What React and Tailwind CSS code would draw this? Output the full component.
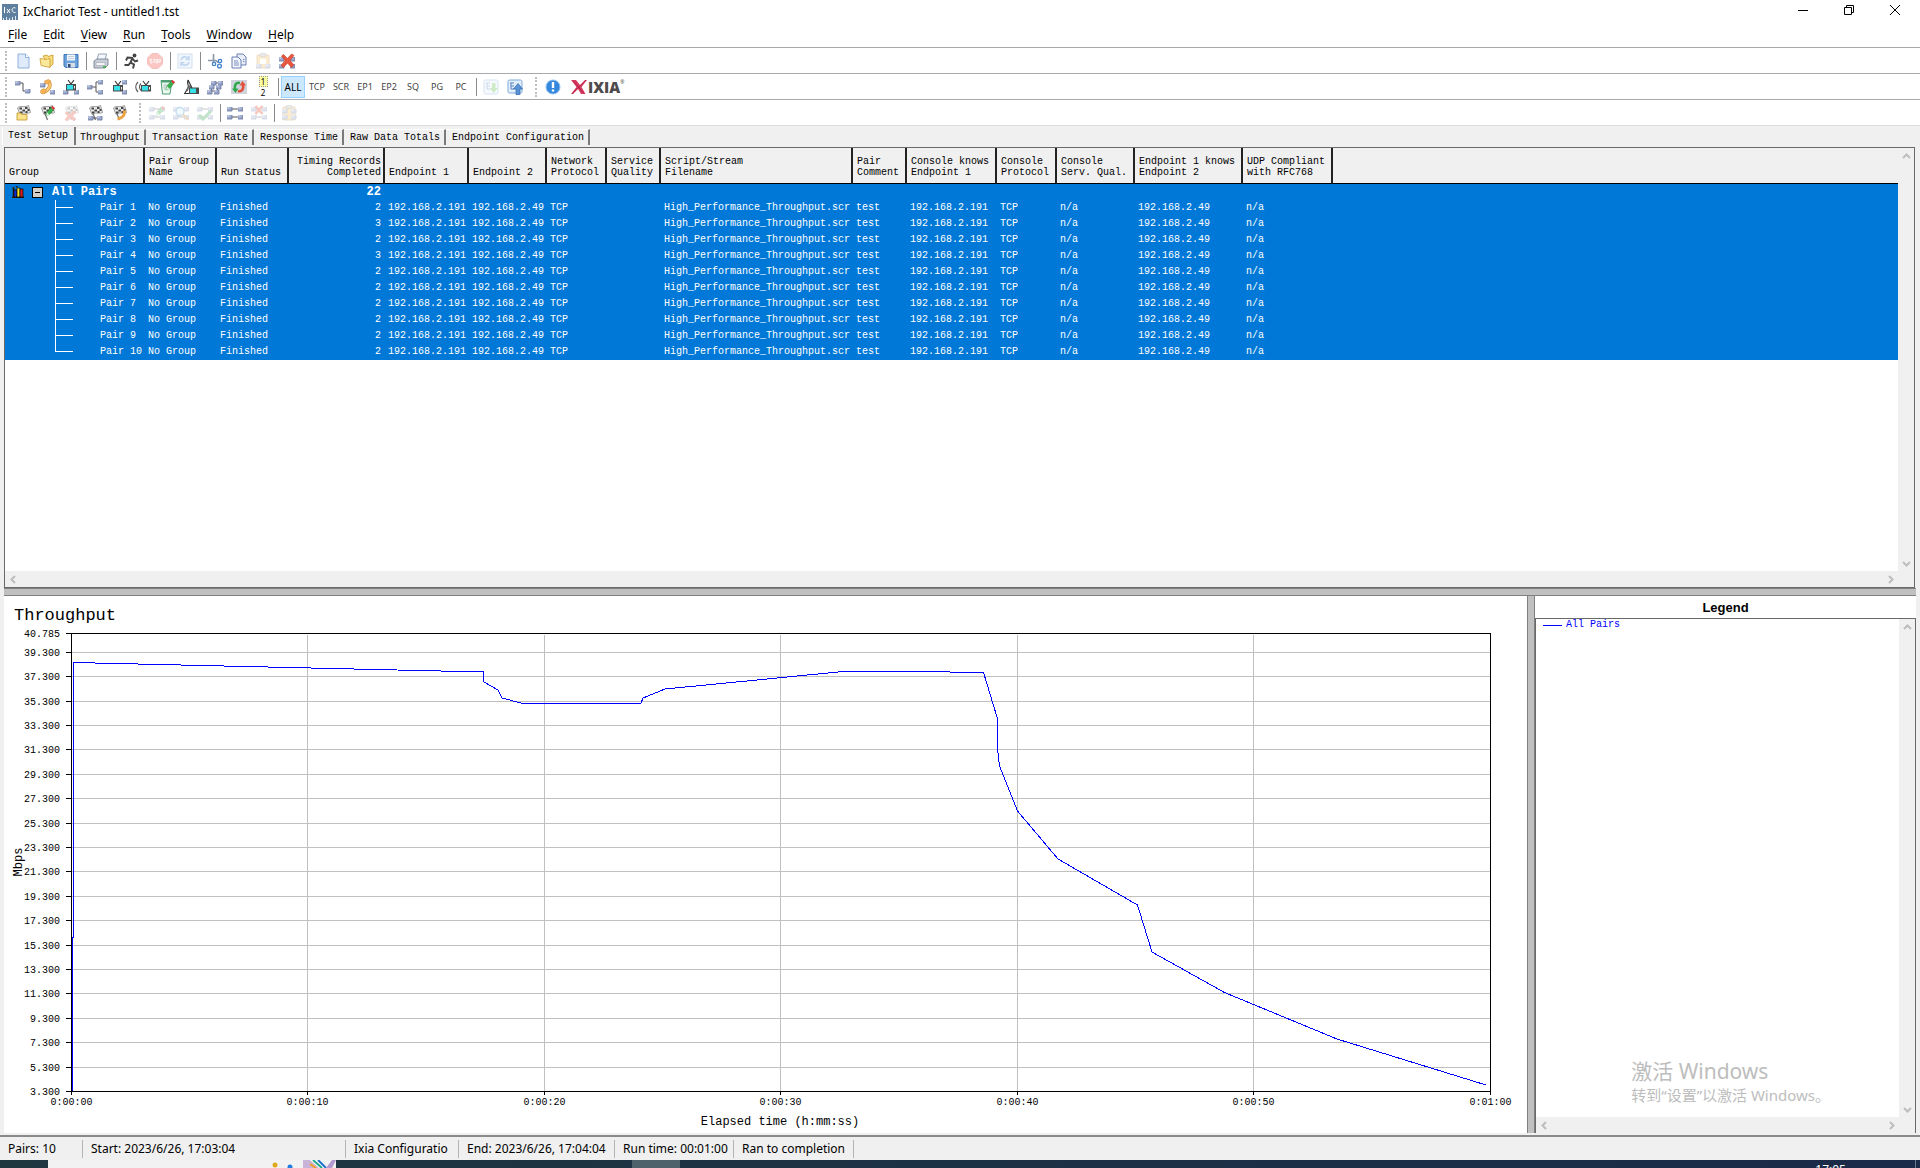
import React from "react";

const MONO = "font-['Liberation_Mono',monospace]";
const UI = "font-['Noto_Sans','Noto_Sans_CJK_SC',sans-serif]";

/* ---------- icon building blocks ---------- */

const Svg = ({ children, faded }) => (
  <svg viewBox="0 0 16 16" className={faded ? "h-4 w-4 opacity-30" : "h-4 w-4"} aria-hidden="true">
    {children}
  </svg>
);

const Node = ({ x, y, c = "#9aa7cb" }) => (
  <g>
    <rect x={x} y={y} width="5" height="4" fill={c} />
    <path d={`M${x} ${y + 4}h5v-4`} fill="none" stroke="#66749f" strokeWidth="0.8" />
    <path d={`M${x + 0.5} ${y + 1}h2`} stroke="#dfe5f5" />
  </g>
);

const Tv = ({ x = 3, y = 6 }) => (
  <g>
    <path d={`M${x + 2} ${y - 4}l3 4l3-4`} fill="none" stroke="#333" strokeWidth="1.1" />
    <rect x={x} y={y} width="10" height="6.5" fill="#4b4b4b" />
    <rect x={x + 1} y={y + 1} width="6" height="4.5" fill="#35e0e6" />
    <path d={`M${x + 8.5} ${y + 2}v2.5`} stroke="#eee" />
  </g>
);

const Phone = () => (
  <g>
    <path d="M9.500 2c3 4 1 9-5 11" fill="none" stroke="#d08a2a" strokeWidth="3.600" />
    <path d="M9.500 2c3 4 1 9-5 11" fill="none" stroke="#fbc878" strokeWidth="2.200" />
    <path d="M5.500 2l4-1.500 2.500 2-3.500 2.500-2.500-.5zM2 11l3-1.500 2 2-1 3-3 .5-1.500-1.500z" fill="#f7b457" stroke="#d08a2a" strokeWidth=".6" />
  </g>
);

const Pencil = () => (
  <g>
    <path d="M7 11l1-4 5-5.500 2.500 2-5 6z" fill="#37b24d" stroke="#1e7a33" strokeWidth=".6" />
    <path d="M12 2.500l1.500-1.500 2.500 2-1.500 2z" fill="#e63946" />
    <path d="M7 11l1-4 2.500 3z" fill="#d7f5dc" />
  </g>
);

const Cross = ({ s = 1 }) => (
  <path
    d={s === 1 ? "M2.500 3l2-1.500 4 4 4-4.500 2.500 1.500-4 5 4 4.500-2.500 2.500-4-4.500-4 4.500-2.500-2 4-5z" : "M2 8l2-1.500 3 3 4-4 2 1.500-3.500 4 3.500 3-2 2-3.500-3-3.500 3-2-1.500 3-3.500z"}
    fill="#e9573f"
    stroke="#c23a28"
    strokeWidth=".6"
  />
);

const Flag = () => (
  <g>
    <path d="M4 3.500L8.500 15" stroke="#777" strokeWidth="1.300" />
    <path d="M2.500 3c3-3 7 0 11-2.500l2 7c-4 2-7-1-10.500 2z" fill="#ececec" stroke="#777" strokeWidth=".7" />
    <path d="M4.500 2.500H7v2H4.500zM10 2h2.500v2H10zM7.500 4.500H10v2H7.500zM12.500 4h2v2h-2zM5 6.500h2.500v2H5zM10.500 6h2v2h-2z" fill="#444" />
  </g>
);

const Quad = () => (
  <g>
    <path d="M5 4h6M5 12h6" stroke="#555" />
    <Node x={0} y={2} />
    <Node x={11} y={2} />
    <Node x={0} y={10} />
    <Node x={11} y={10} />
  </g>
);

const Board = () => (
  <g>
    <rect x="2" y="2" width="12" height="13" rx="1" fill="#f2c063" stroke="#b98532" strokeWidth=".8" />
    <rect x="5" y="0.500" width="6" height="3" rx="1" fill="#bbb" stroke="#777" strokeWidth=".6" />
  </g>
);

const ICONS = {
  New: (
    <Svg>
      <path d="M3 1h7.500L14 4.500V15H3z" fill="#dfeafb" stroke="#8fb0de" />
      <path d="M10.500 1v3.500H14" fill="#fff" stroke="#8fb0de" />
    </Svg>
  ),
  Open: (
    <Svg>
      <path d="M4 3l4-1 1 1.500 5-1.500v9l-3 3z" fill="#f7dd7d" stroke="#c9982a" strokeWidth=".8" />
      <path d="M1 5.500l7 1 1-1 2 .5v8.500L2 12.500z" fill="#fbe99b" stroke="#c9982a" strokeWidth=".8" />
    </Svg>
  ),
  Save: (
    <Svg>
      <path d="M1 1.500h14v13H2.500L1 13z" fill="#6ba3dc" stroke="#3c73b5" />
      <rect x="4" y="1.500" width="8" height="6" fill="#f3f7fc" />
      <path d="M5 3.500h6M5 5.500h6" stroke="#b9c7d8" strokeWidth=".8" />
      <rect x="4" y="10" width="8" height="4.500" fill="#d7dde6" />
      <rect x="5" y="11" width="2.500" height="3.500" fill="#2f4f79" />
    </Svg>
  ),
  Print: (
    <Svg>
      <path d="M5.500 1h8L12 7H4z" fill="#f4f8ff" stroke="#7f8ca3" strokeWidth=".8" />
      <path d="M1 8l3-2h11v6l-3 3H1z" fill="#c9cfd9" stroke="#6d7686" strokeWidth=".8" />
      <path d="M3 9.500h9v3H3z" fill="#f5f5f5" stroke="#8a93a3" strokeWidth=".5" />
      <path d="M10 14h3" stroke="#37a93c" strokeWidth="1.600" />
    </Svg>
  ),
  Runner: (
    <Svg>
      <circle cx="11.500" cy="2.500" r="1.900" fill="#444" />
      <path d="M10 5L4.500 4.500 3 7.500M9.500 5L7.500 9.500l3.500 2-1 4M7.500 9.500L5.500 12H1.500M9.500 5.500l2.500 3 3-1" fill="none" stroke="#444" strokeWidth="1.900" />
    </Svg>
  ),
  Stop: (
    <Svg faded>
      <path d="M5 .5h6L15.500 5v6L11 15.500H5L.5 11V5z" fill="#f0453a" stroke="#d33" />
      <path d="M3 6.500h2M3 6.500v1.500h2v2H3M6 6.500h2.500M7.200 6.500V10M9 6.500h1.500V10H9zM12 10V6.500h1.500v2H12" fill="none" stroke="#fff" strokeWidth=".8" />
    </Svg>
  ),
  Refresh: (
    <Svg faded>
      <rect x="1" y="1" width="14" height="14" fill="#d5e6fa" stroke="#6f9bd1" />
      <path d="M4 7c1-4 6-4 8-1M12 3v3.500H8.500M12 9c-1 4-6 4-8 1M4 13V9.500h3.500" fill="none" stroke="#3a7fd0" strokeWidth="1.600" />
    </Svg>
  ),
  Cut: (
    <Svg>
      <path d="M6.500 1v8M1 7.500h7.500l3 2" fill="none" stroke="#8a97a6" strokeWidth="1.600" />
      <circle cx="7" cy="11" r="1.700" fill="none" stroke="#3f80cc" strokeWidth="1.300" />
      <circle cx="13" cy="8" r="1.700" fill="none" stroke="#3f80cc" strokeWidth="1.300" />
      <circle cx="12.500" cy="13" r="1.900" fill="none" stroke="#3f80cc" strokeWidth="1.300" />
    </Svg>
  ),
  Copy: (
    <Svg>
      <path d="M6 1h6l3 3v8H6z" fill="#e8edf8" stroke="#6a7fb5" />
      <path d="M1 4h6l3 3v8H1z" fill="#f2f5fc" stroke="#6a7fb5" />
      <path d="M3 8h4M3 10h5M3 12h5M12 6.500h1.500M12 8.500h1.500" stroke="#7b8fc0" />
    </Svg>
  ),
  Paste: (
    <Svg faded>
      <Board />
      <path d="M5 6h6v5H5z" fill="#fff" />
      <Node x={1} y={11} />
      <Node x={10} y={11} />
    </Svg>
  ),
  Delete: (
    <Svg>
      <Node x={0} y={4} />
      <Node x={11} y={4} />
      <Node x={11} y={11} />
      <Node x={0} y={11} />
      <Cross />
    </Svg>
  ),
  Pair: (
    <Svg>
      <path d="M4 4h4v8h4" fill="none" stroke="#555" />
      <Node x={0} y={2} />
      <Node x={10} y={10} />
    </Svg>
  ),
  Voice: (
    <Svg>
      <Node x={1} y={4} />
      <Node x={11} y={11} />
      <Phone />
    </Svg>
  ),
  Video: (
    <Svg>
      <Node x={0} y={11} />
      <Node x={11} y={11} />
      <Tv x={3} y={5} />
    </Svg>
  ),
  Multicast: (
    <Svg>
      <path d="M5 8h4M14 3H9v10h5" fill="none" stroke="#555" />
      <Node x={0} y={6} />
      <Node x={11} y={1} />
      <Node x={11} y={11} />
    </Svg>
  ),
  VideoMulti: (
    <Svg>
      <Node x={11} y={1} />
      <Node x={11} y={11} />
      <Tv x={2} y={6} />
    </Svg>
  ),
  VideoCast: (
    <Svg>
      <path d="M3 3c-3 3-3 7 0 10M6 4.500c-2 2-2 5 0 7" fill="none" stroke="#555" strokeWidth="1.100" />
      <Tv x={6} y={6} />
    </Svg>
  ),
  Script: (
    <Svg>
      <path d="M2 1.500h11l-2 13.500H3.500z" fill="#e9f7ec" stroke="#4f9d74" />
      <path d="M2 1.500h11l-.3 2H2.500z" fill="#4f9d74" />
      <path d="M4.500 6h4M4.500 8h3M5 10h3" stroke="#9ab" strokeWidth=".8" />
      <Pencil />
    </Svg>
  ),
  Dish: (
    <Svg>
      <path d="M5 1c-1 4 0 7 4 8M5 1l4 8M2 14l4-7M1 14.500h5" fill="none" stroke="#333" strokeWidth="1.200" />
      <path d="M6 6l-2 6" stroke="#666" strokeWidth="1.500" />
      <rect x="6" y="8.500" width="10" height="6.500" fill="#4b4b4b" />
      <rect x="7" y="9.500" width="6" height="4.500" fill="#35e0e6" />
    </Svg>
  ),
  Hardware: (
    <Svg>
      <path d="M6 4h6M3 12h6M4 12l3-8M10 12l3-8" stroke="#555" />
      <Node x={4} y={2} />
      <Node x={11} y={2} />
      <Node x={2} y={6} />
      <Node x={9} y={6} />
      <Node x={0} y={11} />
      <Node x={7} y={11} />
    </Svg>
  ),
  Swap: (
    <Svg>
      <rect x="0" y="1" width="16" height="14" fill="#cfd4dc" />
      <path d="M9 4C5 3 3 6 4 11" fill="none" stroke="#2fa84b" strokeWidth="2.600" />
      <path d="M1 9.500h6.500L4.500 14z" fill="#2fa84b" />
      <path d="M7 12c4 1 6-2 5-7" fill="none" stroke="#e5513c" strokeWidth="2.600" />
      <path d="M15 6.500H8.500L11.500 2z" fill="#e5513c" />
    </Svg>
  ),
  Folder: (
    <Svg>
      <Flag />
      <path d="M2 8h4l1 1.500h5V15H2z" fill="#f9e28a" stroke="#c09327" strokeWidth=".8" />
    </Svg>
  ),
  FlagEdit: (
    <Svg>
      <Flag />
      <Pencil />
    </Svg>
  ),
  FlagDelete: (
    <Svg faded>
      <Flag />
      <Cross s={2} />
    </Svg>
  ),
  FlagPair: (
    <Svg>
      <Flag />
      <path d="M5 13h6" stroke="#555" />
      <Node x={1} y={11} />
      <Node x={10} y={11} />
    </Svg>
  ),
  FlagPhone: (
    <Svg>
      <Flag />
      <path d="M13 5.500c1.500 4-1 7.500-6.500 8.500" fill="none" stroke="#eda342" strokeWidth="2.800" />
    </Svg>
  ),
  QuadEdit: (
    <Svg faded>
      <Quad />
      <Pencil />
    </Svg>
  ),
  QuadFind: (
    <Svg faded>
      <Quad />
      <circle cx="7" cy="6.500" r="4" fill="#d5ecfb" stroke="#3a8fd0" strokeWidth="1.300" />
      <path d="M10 9.500l5 5" stroke="#c8862c" strokeWidth="2.200" />
    </Svg>
  ),
  QuadCheck: (
    <Svg faded>
      <Quad />
      <path d="M2 10l4 4 8-8" fill="none" stroke="#2fa84b" strokeWidth="3" />
    </Svg>
  ),
  Quad: (
    <Svg>
      <Quad />
    </Svg>
  ),
  QuadDelete: (
    <Svg faded>
      <Quad />
      <path d="M4.500 1l7 8M11.500 1l-7 8" stroke="#e2452f" strokeWidth="2.600" />
    </Svg>
  ),
  QuadBoard: (
    <Svg faded>
      <Board />
      <Node x={1} y={4} />
      <Node x={10} y={4} />
      <Node x={1} y={10} />
      <Node x={10} y={10} />
    </Svg>
  ),
  Import: (
    <Svg faded>
      <rect x="1" y="1" width="14" height="14" rx="1.500" fill="#e2eefb" stroke="#7fa9dc" />
      <path d="M3 4h4M4 4v6h3M4 7h3" fill="none" stroke="#5a83b8" />
      <path d="M9 4h3.500v5H15l-4.300 5L6.500 9H9z" fill="#5bc04a" />
    </Svg>
  ),
  Export: (
    <Svg>
      <rect x="1" y="1" width="14" height="13" rx="1.500" fill="#e2eefb" stroke="#7fa9dc" />
      <path d="M3 4h4M4 4v6h3M4 7h3" fill="none" stroke="#5a83b8" />
      <path d="M9 15.500h4V10h2.500L11 4.500 6.500 10H9z" fill="#5b93d6" stroke="#2f68ad" strokeWidth=".7" />
    </Svg>
  ),
  Info: (
    <Svg>
      <circle cx="8" cy="8" r="7" fill="#3487dd" stroke="#8ebdf0" />
      <path d="M8 3v6M8 10.500v2" stroke="#fff" strokeWidth="2.400" />
    </Svg>
  ),
};

/* ---------- toolbars ---------- */

const Grip = ({ first }) => (
  <div className={first ? "flex w-[11px] shrink-0 justify-center" : "flex w-[14px] shrink-0 justify-center pl-1"}>
    <div className="h-5 border-l-2 border-dotted border-[#bdbdbd]" />
  </div>
);
const Sep = () => (
  <div className="flex w-[6px] shrink-0 justify-center">
    <div className="h-[18px] w-px bg-[#8c8c8c]" />
  </div>
);

const Tool = ({ name }) => (
  <button type="button" aria-label={name} className="flex h-6 w-6 shrink-0 items-center justify-center">
    {ICONS[name]}
  </button>
);

const TextTool = ({ label, active }) => (
  <button
    type="button"
    className={
      active
        ? "h-[22px] w-6 shrink-0 border border-[#99d1ff] bg-[#cce8ff] text-center text-[10px] leading-5 text-black"
        : "h-[22px] w-6 shrink-0 text-center text-[9px] leading-[22px] text-[#444]"
    }
  >
    {label}
  </button>
);

const Toolbar = ({ children }) => (
  <div className="flex h-[26px] items-center border-t border-[#a9a9ad] bg-white">{children}</div>
);

const items = (list) =>
  list.map((n, i) => {
    if (n === "|") return <Sep key={i} />;
    if (n === ":") return <Grip key={i} />;
    return <Tool key={i} name={n} />;
  });

/* ---------- table ---------- */

const COLUMNS = [
  { w: "w-[140px]", t: ["Group"] },
  { w: "w-[72px]", t: ["Pair Group", "Name"] },
  { w: "w-[72px]", t: ["Run Status"] },
  { w: "w-[96px]", t: ["Timing Records", "Completed"], right: true },
  { w: "w-[84px]", t: ["Endpoint 1"] },
  { w: "w-[78px]", t: ["Endpoint 2"] },
  { w: "w-[60px]", t: ["Network", "Protocol"] },
  { w: "w-[54px]", t: ["Service", "Quality"] },
  { w: "w-[192px]", t: ["Script/Stream", "Filename"] },
  { w: "w-[54px]", t: ["Pair", "Comment"] },
  { w: "w-[90px]", t: ["Console knows", "Endpoint 1"] },
  { w: "w-[60px]", t: ["Console", "Protocol"] },
  { w: "w-[78px]", t: ["Console", "Serv. Qual."] },
  { w: "w-[108px]", t: ["Endpoint 1 knows", "Endpoint 2"] },
  { w: "w-[90px]", t: ["UDP Compliant", "with RFC768"] },
];

const RECORDS = [2, 3, 2, 3, 2, 2, 2, 2, 2, 2];

const row = (records) => [
  "No Group", "Finished", records, "192.168.2.191", "192.168.2.49", "TCP", "",
  "High_Performance_Throughput.scr", "test", "192.168.2.191", "TCP", "n/a", "192.168.2.49", "n/a",
];

const PairTable = () => (
  <table className={`w-full table-fixed border-separate border-spacing-0 text-[10px] leading-[11px] ${MONO}`}>
    <thead>
      <tr className="h-9 bg-[#f0f0f0]">
        {COLUMNS.map((c, i) => (
          <th
            key={i}
            scope="col"
            className={`${c.w} border-b border-r-2 border-b-black border-r-[#222] pb-[5px] pl-1 pr-[2px] align-bottom font-normal whitespace-nowrap ${c.right ? "text-right" : "text-left"}`}
          >
            {c.t.map((l) => (
              <div key={l}>{l}</div>
            ))}
          </th>
        ))}
        <th className="border-b border-black" />
      </tr>
    </thead>
    <tbody className="bg-[#0078d7] text-white">
      <tr className="h-4">
        <td className="p-0">
          <div className="flex h-4 items-center pl-[7px] text-[12px] leading-4 font-bold whitespace-nowrap">
            <svg viewBox="0 0 12 12" className="mr-2 h-3 w-3" aria-hidden="true">
              <path d="M0 11.500h12M1.500 1v10M.5 2.500h2M4 1l1.500-1" stroke="#2b1a00" strokeWidth="1.500" />
              <rect x="2" y="4" width="3" height="7" fill="#1230d8" stroke="#000" strokeWidth=".7" />
              <rect x="5" y="2" width="3" height="9" fill="#f4e325" stroke="#000" strokeWidth=".7" />
              <rect x="8" y="3" width="3" height="8" fill="#d61f1f" stroke="#000" strokeWidth=".7" />
            </svg>
            <button type="button" aria-label="Collapse" className="mr-[9px] flex h-[11px] w-[11px] items-center justify-center border border-black bg-[#d4d0c8]">
              <span className="h-px w-[5px] bg-black" />
            </button>
            All Pairs
          </div>
        </td>
        <td />
        <td />
        <td className="p-0 pr-[4px] text-right text-[12px] leading-4 font-bold">22</td>
        <td colSpan="12" />
      </tr>
      {RECORDS.map((r, i) => (
        <tr key={i} className="h-4">
          <td className="p-0">
            <div className="flex h-4 items-center pl-[50px] leading-4">
              <div className="flex h-4 w-[18px] flex-col">
                <div className="h-2 border-b border-l border-white" />
                <div className={i < 9 ? "h-2 border-l border-white" : "h-2"} />
              </div>
              <span className="pl-[27px] whitespace-nowrap">Pair {i + 1}</span>
            </div>
          </td>
          {row(r).map((v, j) => (
            <td key={j} className={`py-0 pl-[3px] leading-4 whitespace-nowrap ${j === 2 ? "pr-[4px] text-right" : "pr-0"}`}>
              {v}
            </td>
          ))}
          <td />
        </tr>
      ))}
    </tbody>
  </table>
);

/* ---------- scrollbars ---------- */

const ARROWS = { up: "M1 6l3.500-3.500L8 6", down: "M1 3l3.500 3.500L8 3", left: "M6 1L2.500 4.500 6 8", right: "M3 1l3.500 3.500L3 8" };
const Arrow = ({ dir }) => (
  <button type="button" aria-label={`Scroll ${dir}`} className="flex h-4 w-4 items-center justify-center">
    <svg viewBox="0 0 9 9" className="h-[9px] w-[9px]" fill="none" stroke="#bdbdbd" strokeWidth="2">
      <path d={ARROWS[dir]} />
    </svg>
  </button>
);

const ScrollArea = ({ children }) => (
  <div className="grid min-h-0 flex-1 grid-cols-[1fr_16px] grid-rows-[1fr_16px] bg-[#f0f0f0]">
    <div className="min-h-0 overflow-hidden bg-white">{children}</div>
    <div className="flex flex-col justify-between">
      <Arrow dir="up" />
      <Arrow dir="down" />
    </div>
    <div className="flex justify-between">
      <Arrow dir="left" />
      <Arrow dir="right" />
    </div>
  </div>
);

/* ---------- chart ---------- */

const Y_TICKS = Array.from({ length: 19 }, (_, i) => 3.3 + i * 2);
const X_TICKS = ["0:00:00", "0:00:10", "0:00:20", "0:00:30", "0:00:40", "0:00:50", "0:01:00"];
const yPos = (v) => Math.round(495 - (v - 3.3) * 12.2) + 0.5;
const xPos = (i) => Math.floor(67 + i * 236.5) + 0.5;
const LINE =
  "68,495 68,341 69,341 69,66.5 479.5,76 480,86 494,94 498,102 517,107 637,107 639,102 661,93 702,89 839,75.500 912,75.500 979.500,76.500 993,121 994,157 995.500,170 1013.500,215 1054,263 1133.500,309 1148,356 1220.500,396.500 1333,443 1482,489";

const Chart = () => (
  <svg viewBox="0 0 1523 534" preserveAspectRatio="xMinYMin meet" className={`h-full w-full ${MONO}`} role="img" aria-label="Throughput over elapsed time">
    <text x="10" y="24" fontSize="17">Throughput</text>
    <g stroke="#c0c0c0" shapeRendering="crispEdges">
      {Y_TICKS.map((v) => (
        <path key={v} d={`M67.500 ${yPos(v)}H1487`} />
      ))}
      {X_TICKS.map((t, i) => (
        <path key={t} d={`M${xPos(i)} 39V495`} />
      ))}
    </g>
    <g stroke="#000" fill="none" shapeRendering="crispEdges">
      <rect x="67.500" y="37.500" width="1419" height="458" />
      <path d="M62 37.500H67" />
      {Y_TICKS.map((v) => (
        <path key={v} d={`M62 ${yPos(v)}H67`} />
      ))}
      {X_TICKS.map((t, i) => (
        <path key={t} d={`M${xPos(i)} 495V499`} />
      ))}
    </g>
    <polyline points={LINE} fill="none" stroke="#0000ff" strokeWidth="1" shapeRendering="crispEdges" />
    <g fontSize="10">
      <text x="56" y="41" textAnchor="end">40.785</text>
      {Y_TICKS.map((v) => (
        <text key={v} x="56" y={yPos(v) + 3} textAnchor="end">
          {v.toFixed(3)}
        </text>
      ))}
      {X_TICKS.map((t, i) => (
        <text key={t} x={xPos(i)} y="509" textAnchor="middle">
          {t}
        </text>
      ))}
    </g>
    <text x="776" y="529" fontSize="12" textAnchor="middle">Elapsed time (h:mm:ss)</text>
    <text fontSize="12" textAnchor="middle" transform="translate(18 266) rotate(-90)">Mbps</text>
  </svg>
);

/* ---------- page ---------- */

const MENU = ["File", "Edit", "View", "Run", "Tools", "Window", "Help"];
const TABS = ["Throughput", "Transaction Rate", "Response Time", "Raw Data Totals", "Endpoint Configuration"];
const STATUS = [
  ["Pairs: 10", "w-[83px]"],
  ["Start: 2023/6/26, 17:03:04", "w-[263px]"],
  ["Ixia Configuratio", "w-[113px]"],
  ["End: 2023/6/26, 17:04:04", "w-[156px]"],
  ["Run time: 00:01:00", "w-[119px]"],
  ["Ran to completion", "w-[120px]"],
];

export default function App() {
  return (
    <div className={`relative flex h-screen flex-col overflow-hidden bg-[#f0f0f0] text-[12px] text-black ${UI}`}>
      <header className="flex h-[23px] shrink-0 items-center bg-white pl-[2px]">
        <svg viewBox="0 0 16 16" className="h-4 w-4" aria-hidden="true">
          <rect width="16" height="16" fill="#5f7f9f" />
          <path d="M2.500 3v6M5 5l3 4M8 5L5 9M13.500 4c-4-2-5 5 0 4.500" fill="none" stroke="#fff" strokeWidth="1" />
          <path d="M1.500 16v-2M4.500 16v-3M7.500 16v-2M10.500 16v-3M13.500 16v-4" stroke="#dfe9f3" />
        </svg>
        <h1 className="flex-1 pl-[5px]">IxChariot Test - untitled1.tst</h1>
        <div className="flex pr-[2px] pb-[3px]">
          {["Minimize", "Restore", "Close"].map((n) => (
            <button key={n} type="button" aria-label={n} className="flex h-5 w-[46px] items-center justify-center">
              <svg viewBox="0 0 10 10" className="h-[10px] w-[10px]" fill="none" stroke="#000">
                {n === "Minimize" && <path d="M0 5.500h10" />}
                {n === "Restore" && <path d="M.5 2.500h7v7h-7zM2.500 2.500v-2h7v7h-2" />}
                {n === "Close" && <path d="M0 0l10 10M10 0L0 10" />}
              </svg>
            </button>
          ))}
        </div>
      </header>

      <nav className="flex h-6 shrink-0 items-center bg-white pl-2">
        {MENU.map((m) => (
          <button key={m} type="button" className="mr-4">
            <span className="underline underline-offset-2">{m[0]}</span>
            {m.slice(1)}
          </button>
        ))}
      </nav>

      <Toolbar>
        <Grip first />
        {items(["New", "Open", "Save", "|", "Print", "|", "Runner", "Stop", "|", "Refresh", "|", "Cut", "Copy", "Paste", "Delete"])}
      </Toolbar>
      <Toolbar>
        <Grip first />
        {items(["Pair", "Voice", "Video", "Multicast", "VideoMulti", "VideoCast", "Script", "Dish", "Hardware", "Swap"])}
        <button type="button" className="flex h-6 w-6 shrink-0 flex-col items-center justify-center text-[8px] leading-[11px]">
          <span className="w-[9px] bg-[#ffffa0] outline-1 -outline-offset-1 outline-dotted outline-[#999]">1</span>
          <span>2</span>
        </button>
        <Sep />
        <TextTool label="ALL" active />
        {["TCP", "SCR", "EP1", "EP2", "SQ", "PG", "PC"].map((t) => (
          <TextTool key={t} label={t} />
        ))}
        {items(["|", "Import", "Export", ":", "Info"])}
        <div className="flex items-center pl-[6px]">
          <svg viewBox="0 0 17 16" className="h-4 w-[17px]" aria-hidden="true">
            <path d="M0 1h5l4 5 5-5h2L10.500 8l4 7H10L7 10l-5 5H0l5.500-7z" fill="#d63a5e" />
            <path d="M2 2l11 12M15 1L1 15" stroke="#b02048" strokeWidth=".7" />
          </svg>
          <span className="font-['Open_Sans',sans-serif] text-[15px] leading-4 font-extrabold text-[#4f4b4d]">IXIA</span>
          <span className="-mt-2 text-[5px] text-[#4f4b4d]">®</span>
        </div>
      </Toolbar>
      <Toolbar>
        <Grip first />
        {items(["Folder", "FlagEdit", "FlagDelete", "FlagPair", "FlagPhone", ":", "QuadEdit", "QuadFind", "QuadCheck", "|", "Quad", "QuadDelete", "|", "QuadBoard"])}
      </Toolbar>

      <main className="flex min-h-0 flex-1 flex-col border-t border-[#dcdcdc] pt-px pr-1 pl-1">
        <div role="tablist" className={`-ml-[2px] flex h-5 shrink-0 items-start text-[10px] leading-4 ${MONO}`}>
          <button type="button" role="tab" aria-selected="true" className="h-[18px] border-l border-r-2 border-l-white border-r-[#7a7a7a] pl-[5px] pr-[6px]">
            Test Setup
          </button>
          {TABS.map((t, i) => (
            <button
              key={t}
              type="button"
              role="tab"
              aria-selected="false"
              className={`mt-[2px] h-4 border-t border-r-2 border-t-white border-r-[#7a7a7a] pr-1 ${i === 0 ? "pl-1" : "pl-[6px]"}`}
            >
              {t}
            </button>
          ))}
        </div>

        <section className="mr-px flex h-[441px] shrink-0 flex-col border border-[#696969]">
          <ScrollArea>
            <PairTable />
          </ScrollArea>
        </section>
        <div className="h-2 shrink-0 border-b border-t border-[#808080] bg-[#c0c0c0]" />

        <div className="flex min-h-0 flex-1">
          <section className="min-w-0 flex-1 bg-white">
            <Chart />
          </section>
          <div className="w-2 shrink-0 border-x border-[#808080] bg-[#c0c0c0]" />
          <aside className="flex w-[381px] shrink-0 flex-col">
            <h2 className="h-[22px] shrink-0 bg-white text-center font-['Liberation_Sans',sans-serif] text-[13px] leading-6 font-bold">Legend</h2>
            <div className="flex min-h-0 flex-1 flex-col border-x border-t border-[#696969]">
              <ScrollArea>
                <div className={`flex items-center pl-[7px] text-[10px] leading-3 text-[#0000ff] ${MONO}`}>
                  <span className="mr-1 h-px w-[19px] bg-[#0000ff]" />
                  All Pairs
                </div>
              </ScrollArea>
            </div>
          </aside>
        </div>
      </main>

      <footer className="mt-[2px] flex h-[25px] shrink-0 items-end border-t-2 border-[#8a8a8a] pb-[2px] leading-[18px]">
        {STATUS.map(([t, w]) => (
          <div key={t} className={`${w} h-[18px] shrink-0 border-r border-[#b4b4b4] pl-2 whitespace-nowrap`}>
            {t}
          </div>
        ))}
      </footer>

      <div className="flex h-2 shrink-0 items-start overflow-hidden bg-gradient-to-r from-[#203740] to-[#1a2a48]">
        <div className="ml-12 flex h-2 w-[288px] items-start bg-[#f2f2f2]">
          <svg viewBox="0 0 70 8" className="ml-[218px] h-2 w-[70px]" aria-hidden="true">
            <circle cx="9" cy="5" r="2.500" fill="#e0a91b" />
            <circle cx="24" cy="7" r="2.500" fill="#1f7de0" />
            <path d="M37 0h13l7 8H37z" fill="#c9b3d8" />
            <path d="M44 0l9 8h8L51 0z" fill="#fff" />
            <path d="M47 0l9 8" stroke="#1fa88a" strokeWidth="2" />
            <path d="M52 0l8 8" stroke="#1e6fd0" strokeWidth="2" />
            <path d="M44 4l6 4" stroke="#f0a020" strokeWidth="2" />
            <path d="M66 0l-6 8h6l4-8z" fill="#b49ad0" />
          </svg>
        </div>
        <div className="ml-[296px] h-2 w-12 bg-[#4d626a]" />
        <div className="flex-1" />
        <time className="pt-[2px] pr-[69px] leading-4 text-white">17:05</time>
        <div className="mr-1 h-2 w-px bg-[#6b7890]" />
      </div>

      <div className="pointer-events-none absolute right-[90px] bottom-[63px] text-[#bdbdbd]">
        <p className="text-[21px] leading-7">激活 Windows</p>
        <p className="text-[15px] leading-5">转到“设置”以激活 Windows。</p>
      </div>
    </div>
  );
}
